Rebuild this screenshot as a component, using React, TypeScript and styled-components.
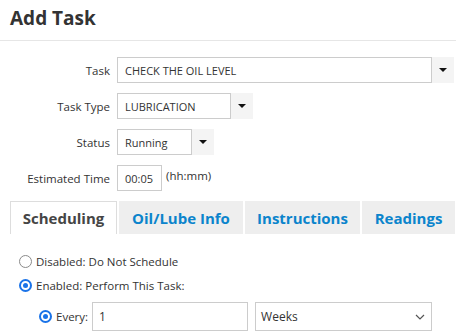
import React, { useState } from "react";
import styled, { createGlobalStyle } from "styled-components";

const GlobalStyle = createGlobalStyle`
  body {
    margin: 0;
    background: #ffffff;
    font-family: "Open Sans", "Noto Sans", Arial, sans-serif;
    color: #333333;
  }
`;

const Page = styled.div`
  width: 456px;
  height: 333px;
  overflow: hidden;
`;

const Header = styled.div`
  height: 41px;
  padding: 0 10px;
  display: flex;
  align-items: center;
  border-bottom: 1px solid #e6e6e6;
  box-sizing: border-box;
`;

const Title = styled.h1`
  margin: -4px 0 0;
  font-size: 19px;
  font-weight: 700;
  color: #333333;
`;

const Form = styled.div`
  display: flex;
  flex-direction: column;
  gap: 10px;
  padding-top: 16px;
`;

const Row = styled.div`
  display: grid;
  grid-template-columns: 110px auto;
  column-gap: 7px;
  align-items: center;
`;

const Label = styled.label`
  text-align: right;
  font-size: 11.5px;
  color: #333333;
`;

const Field = styled.div`
  display: flex;
  align-items: center;
`;

const TextBox = styled.div<{ $width: number }>`
  width: ${(p) => p.$width}px;
  height: 26px;
  box-sizing: border-box;
  border: 1px solid #cccccc;
  padding: 0 7px;
  display: flex;
  align-items: center;
  font-size: 11px;
  color: #333333;
  white-space: nowrap;
`;

const DropButton = styled.div`
  width: 22px;
  height: 26px;
  background: #f4f4f4;
  display: flex;
  align-items: center;
  justify-content: center;
`;

const Caret = styled.span`
  width: 0;
  height: 0;
  border-left: 4px solid transparent;
  border-right: 4px solid transparent;
  border-top: 4px solid #111111;
`;

const Hint = styled.span`
  font-size: 11.5px;
  margin-left: 4px;
  margin-top: -5px;
  color: #333333;
`;

const Tabs = styled.div`
  display: flex;
  gap: 2px;
  padding-left: 10px;
  margin-top: 10px;
`;

const Tab = styled.div<{ $active?: boolean; $width: number }>`
  width: ${(p) => p.$width}px;
  height: 33px;
  box-sizing: border-box;
  display: flex;
  align-items: center;
  justify-content: center;
  font-size: 15px;
  font-weight: 700;
  white-space: nowrap;
  cursor: pointer;
  color: ${(p) => (p.$active ? "#454545" : "#0b84cc")};
  background: ${(p) => (p.$active ? "#ffffff" : "#eeeeee")};
  border: 1px solid ${(p) => (p.$active ? "#dddddd" : "#eeeeee")};
  border-bottom: none;
`;

const Schedule = styled.div`
  display: flex;
  flex-direction: column;
  padding: 20px 0 0 19px;
  gap: 9px;
`;

const Option = styled.div<{ $indent?: number }>`
  display: flex;
  align-items: center;
  gap: 4px;
  margin-left: ${(p) => p.$indent || 0}px;
  font-size: 11.5px;
  color: #333333;
`;

const Radio = styled.span<{ $checked?: boolean }>`
  width: 13px;
  height: 13px;
  box-sizing: border-box;
  border-radius: 50%;
  border: ${(p) => (p.$checked ? "2px solid #1a73e8" : "1.5px solid #8a8a8a")};
  display: flex;
  align-items: center;
  justify-content: center;
  flex-shrink: 0;
  &::after {
    content: "";
    display: ${(p) => (p.$checked ? "block" : "none")};
    width: 5px;
    height: 5px;
    border-radius: 50%;
    background: #1a73e8;
  }
`;

const EveryBox = styled(TextBox)`
  height: 29px;
  font-size: 12px;
  padding: 0 6px;
`;

const SelectBox = styled(EveryBox)`
  margin-left: 3px;
  justify-content: space-between;
  padding: 0 6px 0 5px;
`;

const tabs = [
  { label: "Scheduling", width: 107 },
  { label: "Oil/Lube Info", width: 124 },
  { label: "Instructions", width: 115 },
  { label: "Readings", width: 93 },
];

export default function App() {
  const [active, setActive] = useState(0);
  return (
    <Page>
      <GlobalStyle />
      <Header>
        <Title>Add Task</Title>
      </Header>
      <Form>
        <Row>
          <Label>Task</Label>
          <Field>
            <TextBox $width={315}>CHECK THE OIL LEVEL</TextBox>
            <DropButton>
              <Caret />
            </DropButton>
          </Field>
        </Row>
        <Row>
          <Label>Task Type</Label>
          <Field>
            <TextBox $width={114}>LUBRICATION</TextBox>
            <DropButton>
              <Caret />
            </DropButton>
          </Field>
        </Row>
        <Row>
          <Label>Status</Label>
          <Field>
            <TextBox $width={75}>Running</TextBox>
            <DropButton>
              <Caret />
            </DropButton>
          </Field>
        </Row>
        <Row>
          <Label>Estimated Time</Label>
          <Field>
            <TextBox $width={45}>00:05</TextBox>
            <Hint>(hh:mm)</Hint>
          </Field>
        </Row>
      </Form>
      <Tabs>
        {tabs.map((t, i) => (
          <Tab
            key={t.label}
            $width={t.width}
            $active={i === active}
            onClick={() => setActive(i)}
          >
            {t.label}
          </Tab>
        ))}
      </Tabs>
      <Schedule>
        <Option>
          <Radio />
          Disabled: Do Not Schedule
        </Option>
        <Option>
          <Radio $checked />
          Enabled: Perform This Task:
        </Option>
        <Option $indent={20}>
          <Radio $checked />
          Every:
          <EveryBox $width={156}>1</EveryBox>
          <SelectBox $width={177}>
            Weeks
            <svg width="10" height="6" viewBox="0 0 10 6">
              <path d="M1 1l4 4 4-4" fill="none" stroke="#555" strokeWidth="1.2" />
            </svg>
          </SelectBox>
        </Option>
      </Schedule>
    </Page>
  );
}
